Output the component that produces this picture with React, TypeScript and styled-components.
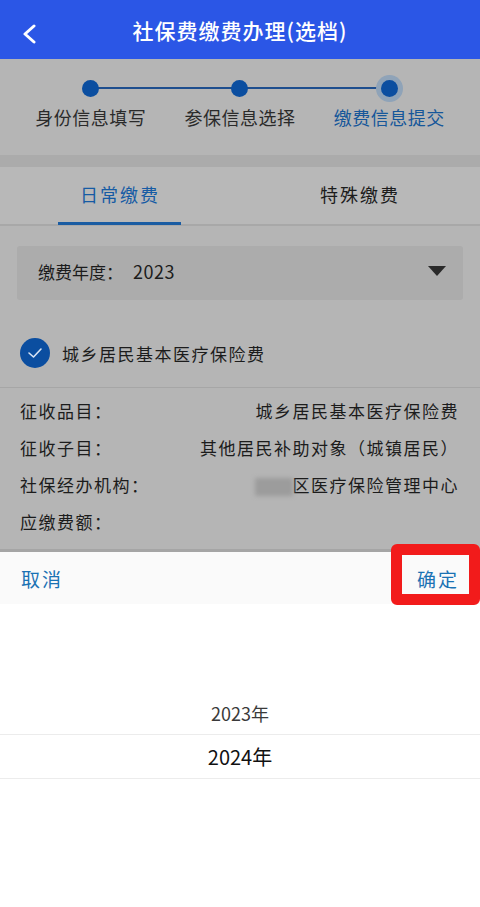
import styled, { createGlobalStyle } from "styled-components";

const GlobalStyle = createGlobalStyle`
  html, body {
    margin: 0;
    padding: 0;
    background: #ffffff;
  }
  body {
    font-family: "Noto Sans CJK SC", "Noto Sans", sans-serif;
    width: 480px;
    height: 907px;
    overflow: hidden;
  }
`;

const Screen = styled.div`
  position: relative;
  width: 480px;
  height: 907px;
  display: flex;
  flex-direction: column;
  background: #ffffff;
`;

const Header = styled.header`
  height: 59px;
  background: #2b56e6;
  display: flex;
  align-items: center;
  justify-content: center;
  position: relative;
  color: #ffffff;
  font-size: 21px;
  font-weight: 500;
  letter-spacing: 1px;
`;

const BackButton = styled.div`
  position: absolute;
  left: 20px;
  top: 20px;
  width: 20px;
  height: 20px;
`;

const Masked = styled.div`
  background: #b5b5b5;
  height: 493px;
  display: flex;
  flex-direction: column;
  border-bottom: 3px solid #a5a5a5;
  box-sizing: border-box;
`;

const Steps = styled.div`
  height: 96px;
  display: grid;
  grid-template-columns: repeat(3, 1fr);
  position: relative;
  padding: 0 16px;
  border-bottom: 12px solid #ababab;
`;

const StepLine = styled.div`
  position: absolute;
  left: 90px;
  right: 91px;
  top: 28px;
  height: 2px;
  background: #1e4e8e;
`;

const Step = styled.div`
  display: flex;
  flex-direction: column;
  align-items: center;
  padding-top: 21px;
  position: relative;
`;

const Dot = styled.div<{ $active?: boolean }>`
  width: 17px;
  height: 17px;
  border-radius: 50%;
  background: #0b4ea0;
  box-shadow: ${(p) => (p.$active ? "0 0 0 5px #8fa3b8" : "none")};
`;

const StepLabel = styled.div<{ $active?: boolean }>`
  margin-top: 7px;
  font-size: 18px;
  color: ${(p) => (p.$active ? "#16579a" : "#2a2a2a")};
  letter-spacing: 0.5px;
`;

const Tabs = styled.div`
  height: 57px;
  display: grid;
  grid-template-columns: 1fr 1fr;
  border-bottom: 2px solid #a8a8a8;
  background: #b8b8b8;
`;

const Tab = styled.div<{ $active?: boolean }>`
  display: flex;
  align-items: center;
  justify-content: center;
  position: relative;
  font-size: 18px;
  letter-spacing: 2px;
  color: ${(p) => (p.$active ? "#165ba4" : "#1c1c1c")};
  padding-bottom: 4px;
  &::after {
    content: "";
    display: ${(p) => (p.$active ? "block" : "none")};
    position: absolute;
    left: 58px;
    width: 123px;
    bottom: -1px;
    height: 3px;
    background: #1a5ca2;
  }
`;

const Dropdown = styled.div`
  margin: 20px 17px 0;
  height: 54px;
  background: #acacac;
  border-radius: 3px;
  display: flex;
  align-items: center;
  justify-content: space-between;
  padding: 0 17px 4px 21px;
  box-sizing: border-box;
  font-size: 17px;
  color: #1c1c1c;
`;

const YearValue = styled.span`
  font-size: 18px;
  margin-left: 10px;
  letter-spacing: 0.5px;
`;

const Caret = styled.div`
  width: 0;
  height: 0;
  border-left: 9px solid transparent;
  border-right: 9px solid transparent;
  border-top: 10px solid #2a2a2a;
`;

const CheckRow = styled.div`
  display: flex;
  align-items: center;
  gap: 12px;
  padding: 38px 20px 19px;
  border-bottom: 1px solid #a6a6a6;
  font-size: 17px;
  letter-spacing: 1.5px;
  color: #1c1c1c;
`;

const CheckCircle = styled.div`
  width: 30px;
  height: 30px;
  border-radius: 50%;
  background: #0b4ea0;
  display: flex;
  align-items: center;
  justify-content: center;
`;

const InfoList = styled.div`
  padding: 4px 21px 0 20px;
  display: flex;
  flex-direction: column;
`;

const InfoRow = styled.div`
  height: 37px;
  display: flex;
  align-items: center;
  justify-content: space-between;
  font-size: 17px;
  letter-spacing: 1.5px;
  color: #1c1c1c;
`;

const Blurred = styled.span`
  display: inline-block;
  width: 38px;
  height: 18px;
  background: #9c9c9c;
  filter: blur(2px);
  vertical-align: middle;
`;

const Sheet = styled.div`
  flex: 1;
  display: flex;
  flex-direction: column;
  background: #ffffff;
`;

const SheetBar = styled.div`
  height: 52px;
  background: #fafafa;
  display: flex;
  align-items: center;
  justify-content: space-between;
  padding: 0 21px;
  font-size: 19px;
  color: #1a72b4;
  letter-spacing: 2px;
`;

const Picker = styled.div`
  padding-top: 87px;
  display: flex;
  flex-direction: column;
`;

const PickerItem = styled.div<{ $selected?: boolean }>`
  height: 43px;
  display: flex;
  align-items: center;
  justify-content: center;
  font-size: ${(p) => (p.$selected ? "20px" : "18px")};
  color: ${(p) => (p.$selected ? "#111111" : "#3a3a3a")};
  border-bottom: ${(p) => (p.$selected ? "1px solid #ececec" : "none")};
  border-top: ${(p) => (p.$selected ? "1px solid #ececec" : "none")};
`;

const Highlight = styled.div`
  position: absolute;
  left: 391px;
  top: 544px;
  width: 89px;
  height: 61px;
  box-sizing: border-box;
  border: 11px solid #f21b1b;
  border-radius: 6px;
`;

const steps = [
  { label: "身份信息填写" },
  { label: "参保信息选择" },
  { label: "缴费信息提交", active: true },
];

export default function App() {
  return (
    <Screen>
      <GlobalStyle />
      <Header>
        <BackButton>
          <svg width="20" height="20" viewBox="0 0 20 20">
            <path d="M14 2 L5 10 L14 18" fill="none" stroke="#fff" strokeWidth="3" strokeLinecap="round" strokeLinejoin="round" />
          </svg>
        </BackButton>
        社保费缴费办理(选档)
      </Header>
      <Masked>
        <Steps>
          <StepLine />
          {steps.map((s) => (
            <Step key={s.label}>
              <Dot $active={s.active} />
              <StepLabel $active={s.active}>{s.label}</StepLabel>
            </Step>
          ))}
        </Steps>
        <Tabs>
          <Tab $active>日常缴费</Tab>
          <Tab>特殊缴费</Tab>
        </Tabs>
        <Dropdown>
          <span>
            缴费年度：<YearValue>2023</YearValue>
          </span>
          <Caret />
        </Dropdown>
        <CheckRow>
          <CheckCircle>
            <svg width="16" height="12" viewBox="0 0 16 12">
              <path d="M2 6 L6.5 10 L14 2" fill="none" stroke="#d8e4f4" strokeWidth="1.6" strokeLinecap="round" strokeLinejoin="round" />
            </svg>
          </CheckCircle>
          城乡居民基本医疗保险费
        </CheckRow>
        <InfoList>
          <InfoRow>
            <span>征收品目：</span>
            <span>城乡居民基本医疗保险费</span>
          </InfoRow>
          <InfoRow>
            <span>征收子目：</span>
            <span>其他居民补助对象（城镇居民）</span>
          </InfoRow>
          <InfoRow>
            <span>社保经办机构：</span>
            <span>
              <Blurred />区医疗保险管理中心
            </span>
          </InfoRow>
          <InfoRow>
            <span>应缴费额：</span>
            <span />
          </InfoRow>
        </InfoList>
      </Masked>
      <Sheet>
        <SheetBar>
          <span>取消</span>
          <span>确定</span>
        </SheetBar>
        <Picker>
          <PickerItem>2023年</PickerItem>
          <PickerItem $selected>2024年</PickerItem>
        </Picker>
      </Sheet>
      <Highlight />
    </Screen>
  );
}
